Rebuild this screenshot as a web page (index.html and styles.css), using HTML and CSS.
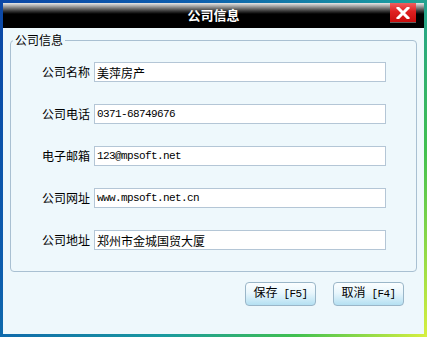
FILE: index.html
```html
<!DOCTYPE html>
<html lang="zh-CN">
<head>
<meta charset="utf-8">
<title>公司信息</title>
<link rel="stylesheet" href="styles.css">
</head>
<body>
<div class="window">
  <div class="titlebar">
    <span class="title">公司信息</span>
    <span class="close">
      <svg width="14" height="12" viewBox="0 0 14 12"><path d="M2 1 L12 11 M12 1 L2 11" stroke="#fff" stroke-width="3" stroke-linecap="square"/></svg>
    </span>
  </div>
  <div class="content">
    <fieldset class="group">
      <legend class="legend">公司信息</legend>
      <div class="rows">
        <div class="row"><label class="label">公司名称</label><div class="field cjk">美萍房产</div></div>
        <div class="row"><label class="label">公司电话</label><div class="field mono">0371-68749676</div></div>
        <div class="row"><label class="label">电子邮箱</label><div class="field mono">123@mpsoft.net</div></div>
        <div class="row"><label class="label">公司网址</label><div class="field mono">www.mpsoft.net.cn</div></div>
        <div class="row"><label class="label">公司地址</label><div class="field cjk">郑州市金城国贸大厦</div></div>
      </div>
    </fieldset>
    <div class="actions">
      <button class="btn">保存<span class="key"> [F5]</span></button>
      <button class="btn">取消<span class="key"> [F4]</span></button>
    </div>
  </div>
</div>
</body>
</html>
```

FILE: styles.css
```css
html, body {
  margin: 0;
  padding: 0;
  background: #ffffff;
}
.window {
  width: 427px;
  height: 337px;
  box-sizing: border-box;
  padding: 3px;
  background: linear-gradient(125deg, #0b47a6 0%, #0d5fae 30%, #1a9aa0 60%, #40c050 80%, #d8f040 100%);
  display: flex;
  flex-direction: column;
  font-family: "Noto Sans CJK SC", "Noto Sans", sans-serif;
  font-size: 12px;
  color: #000;
}
.titlebar {
  height: 25px;
  flex: none;
  display: flex;
  align-items: center;
  justify-content: center;
  position: relative;
  background: linear-gradient(#e8e8e8 0px, #a8a8a8 3px, #383838 8px, #000 11px, #000 100%);
}
.title {
  color: #fff;
  font-weight: bold;
  font-size: 13px;
  line-height: 14px;
  margin-top: -2px;
}
.close {
  position: absolute;
  right: 8px;
  top: 0;
  width: 26px;
  height: 19px;
  background: linear-gradient(#f06060 0%, #e02020 45%, #c80c0c 100%);
  border-bottom: 1px solid #606060;
  display: flex;
  align-items: center;
  justify-content: center;
}
.content {
  flex: 1;
  background: #eef8fc;
  display: flex;
  flex-direction: column;
  padding: 5px 7px 0 7px;
}
.group {
  margin: 0;
  padding: 0 0 21px 0;
  border: 1px solid #a9c0d2;
  border-radius: 4px;
}
.legend {
  margin-left: 2px;
  padding: 0 2px;
  font-size: 12px;
  line-height: 14px;
}
.rows {
  display: flex;
  flex-direction: column;
  gap: 22px;
  padding-top: 15px;
}
.row {
  display: flex;
  align-items: center;
  gap: 4px;
}
.label {
  width: 79px;
  text-align: right;
  line-height: 14px;
}
.field {
  width: 292px;
  height: 20px;
  box-sizing: border-box;
  border: 1px solid #b4c6d6;
  background: #fff;
  padding: 0 2px;
  display: flex;
  align-items: center;
  white-space: nowrap;
}
.cjk {
  font-size: 12px;
}
.mono {
  font-family: "Liberation Mono", "DejaVu Sans Mono", monospace;
  font-size: 11px;
  letter-spacing: -0.6px;
}
.actions {
  display: flex;
  justify-content: flex-end;
  gap: 17px;
  padding: 10px 13px 0 0;
}
.btn {
  width: 71px;
  height: 24px;
  margin: 0;
  padding: 0 0 2px 0;
  border: 1px solid #9ab6c8;
  border-radius: 4px;
  background: linear-gradient(#fbfeff 0%, #e8f6fc 45%, #b4e0f2 100%);
  font-family: "Noto Sans CJK SC", "Noto Sans", sans-serif;
  font-size: 12px;
  color: #000;
  line-height: 14px;
}
.key {
  font-family: "Liberation Mono", "DejaVu Sans Mono", monospace;
  font-size: 11px;
  letter-spacing: -0.6px;
}
```
